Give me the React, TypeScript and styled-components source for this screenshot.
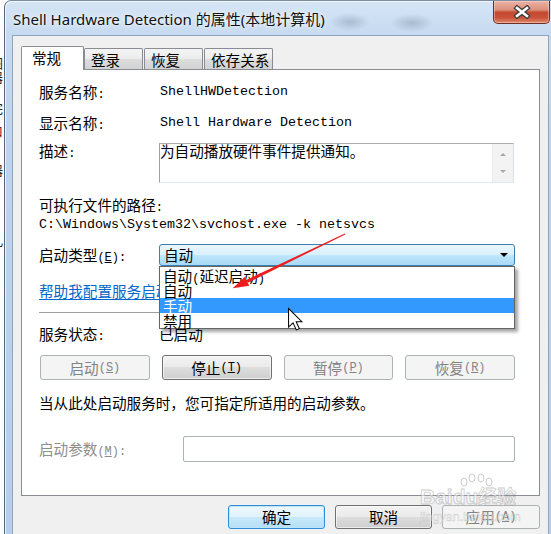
import React from "react";
import styled, { createGlobalStyle } from "styled-components";

const Global = createGlobalStyle`
  html, body { margin: 0; padding: 0; background: #ffffff; overflow: hidden; }
  #root { width: 551px; height: 534px; }
`;

const CJK = `"Noto Sans CJK SC", "Noto Sans", sans-serif`;

const Scene = styled.div`
  position: relative;
  width: 551px;
  height: 534px;
  overflow: hidden;
  display: flex;
  font-family: ${CJK};
  color: #000;
`;

const BackStrip = styled.div`
  width: 4px;
  flex: none;
  background: #fdfdfd;
  overflow: hidden;
  display: flex;
  flex-direction: column;
  font-size: 13px;
  line-height: 14px;
  color: #222;
`;

const Frag = styled.span<{ $top: number; $red?: boolean }>`
  margin-top: ${(p) => p.$top}px;
  margin-left: -10px;
  white-space: nowrap;
  color: ${(p) => (p.$red ? "#7a1020" : "#222")};
`;

const Window = styled.div`
  flex: 1;
  min-width: 0;
  display: flex;
  flex-direction: column;
  border-left: 1px solid #56677d;
  border-top: 1px solid #7b8ca2;
  border-top-left-radius: 7px;
  background:
    radial-gradient(ellipse 20px 9px at 345px 21px, rgba(70, 85, 110, 0.25), transparent),
    radial-gradient(ellipse 22px 9px at 407px 22px, rgba(70, 85, 110, 0.25), transparent),
    linear-gradient(180deg, #d5e5f6 0px, #c6daf0 34px, #bed4ec 140px, #b6cee9 100%);
  box-shadow: inset 1px 1px 0 rgba(255, 255, 255, 0.7);
`;

const TitleBar = styled.div`
  height: 34px;
  flex: none;
  display: flex;
  align-items: flex-start;
`;

const Title = styled.div`
  margin: 8px 0 0 8px;
  font-family: "Noto Sans", "Noto Sans CJK SC", sans-serif;
  font-size: 15px;
  line-height: 20px;
  color: #111;
  white-space: nowrap;
  text-shadow: 0 0 8px rgba(255, 255, 255, 0.95), 0 0 3px rgba(255, 255, 255, 0.9);
`;

const CloseButton = styled.div`
  margin-left: auto;
  margin-right: 1px;
  width: 57px;
  height: 23px;
  box-sizing: border-box;
  border: 1px solid #6e2e24;
  border-top: none;
  border-radius: 0 0 5px 5px;
  background: linear-gradient(
    180deg,
    #eab3a6 0%,
    #dc8f7e 40%,
    #c4492f 52%,
    #c9513a 75%,
    #de8a68 100%
  );
  box-shadow: inset 0 0 0 1px rgba(255, 220, 210, 0.45);
  display: flex;
  align-items: center;
  justify-content: center;
`;

const Body = styled.div`
  flex: 1;
  display: flex;
  padding: 0 2px 0 7px;
`;

const Client = styled.div`
  flex: 1;
  display: flex;
  flex-direction: column;
  background: #f0f0f0;
  border: 1px solid #8fa5bd;
  border-bottom: none;
`;

const TabRow = styled.div`
  height: 33px;
  flex: none;
  display: flex;
  align-items: flex-end;
  padding-left: 8px;
  position: relative;
  z-index: 1;
`;

const Tab = styled.div<{ $active?: boolean; $w: number; $gap: number }>`
  box-sizing: border-box;
  width: ${(p) => p.$w}px;
  margin-left: ${(p) => p.$gap}px;
  height: ${(p) => (p.$active ? 24 : 21)}px;
  margin-bottom: ${(p) => (p.$active ? -1 : 0)}px;
  border: 1px solid #898c95;
  border-bottom: none;
  border-radius: 2px 2px 0 0;
  background: ${(p) =>
    p.$active
      ? "#ffffff"
      : "linear-gradient(180deg, #f4f4f4 0%, #ececec 50%, #dedede 50%, #d2d2d2 100%)"};
  padding: ${(p) => (p.$active ? "1px 0 0 10px" : "1px 0 0 6px")};
  font-size: 14.6px;
  line-height: 20px;
  white-space: nowrap;
`;

const Panel = styled.div`
  position: relative;
  margin-left: 8px;
  width: 519px;
  height: 427px;
  box-sizing: border-box;
  border: 1px solid #898c95;
  background: #ffffff;
  padding: 12px 24px 0 17px;
  display: flex;
  flex-direction: column;
`;

const Row = styled.div<{ $mt: number; $cols?: string; $align?: string }>`
  margin-top: ${(p) => p.$mt}px;
  display: grid;
  grid-template-columns: ${(p) => p.$cols ?? "120px 1fr"};
  align-items: ${(p) => p.$align ?? "center"};
`;

const Label = styled.div<{ $muted?: boolean; $lh?: number }>`
  height: ${(p) => p.$lh ?? 20}px;
  font-size: 14.6px;
  line-height: ${(p) => p.$lh ?? 20}px;
  color: ${(p) => (p.$muted ? "#8d8d8d" : "#000")};
  white-space: nowrap;
`;

const Asc = styled.span`
  font-family: "Liberation Mono", monospace;
  font-size: 12px;
  line-height: 1;
`;

const Key = styled.span`
  text-decoration: underline;
  text-underline-offset: 1px;
`;

const Mono = styled.div<{ $pl?: number }>`
  height: 20px;
  font-family: "Liberation Mono", monospace;
  font-size: 13.33px;
  line-height: 20px;
  padding-left: ${(p) => p.$pl ?? 0}px;
  white-space: nowrap;
`;

const DescBox = styled.div`
  width: 355px;
  height: 40px;
  box-sizing: border-box;
  border: 1px solid;
  border-color: #abadb3 #dbdfe6 #e3e9ef #9ea1a8;
  display: flex;
`;

const DescText = styled.div`
  flex: 1;
  font-size: 14.6px;
  line-height: 14px;
  white-space: nowrap;
`;

const DescScroll = styled.div`
  width: 20px;
  background: #f3f3f3;
  border-left: 1px solid #ececec;
  display: flex;
  flex-direction: column;
  align-items: center;
  padding-top: 9px;
  gap: 14px;
`;

const ScrollArrow = styled.span<{ $down?: boolean }>`
  width: 0;
  height: 0;
  border-left: 3px solid transparent;
  border-right: 3px solid transparent;
  ${(p) => (p.$down ? "border-top: 3px solid #a8a8a8;" : "border-bottom: 3px solid #a8a8a8;")}
`;

const Block = styled.div<{ $mt: number }>`
  margin-top: ${(p) => p.$mt}px;
  display: flex;
  flex-direction: column;
`;

const ComboWrap = styled.div`
  position: relative;
`;

const ComboBox = styled.div`
  height: 22px;
  box-sizing: border-box;
  border: 1px solid #3c7fb1;
  border-radius: 3px;
  background: linear-gradient(180deg, #eaf6fd 0%, #d9f0fc 48%, #bee6fd 52%, #a7d9f5 100%);
  display: flex;
  align-items: center;
  justify-content: space-between;
  padding: 0 6px 0 4px;
  font-size: 14.6px;
  line-height: 20px;
`;

const ComboArrow = styled.span`
  width: 0;
  height: 0;
  border-left: 4px solid transparent;
  border-right: 4px solid transparent;
  border-top: 4px solid #000;
`;

const Dropdown = styled.div`
  position: absolute;
  top: 100%;
  left: 0;
  right: 0;
  z-index: 5;
  box-sizing: border-box;
  border: 1px solid #646464;
  background: #ffffff;
  padding-top: 1px;
  box-shadow: 3px 3px 3px rgba(0, 0, 0, 0.35);
`;

const Option = styled.div<{ $sel?: boolean }>`
  height: 15px;
  line-height: 15px;
  font-size: 14.6px;
  padding-left: 3px;
  white-space: nowrap;
  background: ${(p) => (p.$sel ? "#3399ff" : "transparent")};
  color: ${(p) => (p.$sel ? "#ffffff" : "#000")};
`;

const Link = styled.div<{ $mt: number }>`
  margin-top: ${(p) => p.$mt}px;
  height: 20px;
  font-size: 14.6px;
  line-height: 20px;
  color: #0066cc;
  text-decoration: underline;
  text-underline-offset: 2px;
  white-space: nowrap;
`;

const Separator = styled.div<{ $mt: number }>`
  margin-top: ${(p) => p.$mt}px;
  height: 1px;
  background: #a0a0a0;
`;

const ButtonGrid = styled.div<{ $mt: number }>`
  margin-top: ${(p) => p.$mt}px;
  margin-left: 1px;
  display: grid;
  grid-template-columns: repeat(4, 1fr);
  gap: 12px;
`;

type Variant = "normal" | "disabled" | "default";

const Btn = styled.div<{ $v: Variant; $h?: number; $w?: number }>`
  box-sizing: border-box;
  height: ${(p) => p.$h ?? 25}px;
  ${(p) => (p.$w ? `width: ${p.$w}px;` : "")}
  border-radius: 3px;
  display: flex;
  align-items: center;
  justify-content: center;
  font-size: 14.6px;
  line-height: 20px;
  white-space: nowrap;
  ${(p) =>
    p.$v === "disabled"
      ? `border: 1px solid #adb2b5; background: #f4f4f4; color: #838383;`
      : p.$v === "default"
      ? `border: 1px solid #2f8ed5; background: linear-gradient(180deg, #eef8fd 0%, #e0f2fc 50%, #c9e9fb 50%, #b4dff6 100%); box-shadow: inset 0 0 0 1px #bde6fb; color: #000;`
      : `border: 1px solid #707070; background: linear-gradient(180deg, #f2f2f2 0%, #ebebeb 50%, #dddddd 50%, #cfcfcf 100%); box-shadow: inset 0 0 0 1px rgba(255,255,255,0.6); color: #000;`}
`;

const Hint = styled.div<{ $mt: number }>`
  margin-top: ${(p) => p.$mt}px;
  height: 20px;
  font-size: 14.6px;
  line-height: 20px;
  white-space: nowrap;
`;

const ParamInput = styled.div`
  height: 26px;
  box-sizing: border-box;
  border: 1px solid #adb2b5;
  border-radius: 2px;
  background: #ffffff;
`;

const Footer = styled.div`
  margin-top: 9px;
  padding-right: 8px;
  display: flex;
  justify-content: flex-end;
  gap: 10px;
`;

const Overlay = styled.svg`
  position: absolute;
  left: 0;
  top: 0;
  pointer-events: none;
  z-index: 10;
`;

const Watermark = styled.div`
  position: absolute;
  left: 420px;
  top: 473px;
  z-index: 11;
  display: flex;
  flex-direction: column;
  align-items: flex-start;
  pointer-events: none;
  color: rgba(255, 255, 255, 0.55);
  -webkit-text-stroke: 0.8px rgba(150, 150, 150, 0.5);
`;

const WmTitle = styled.div`
  margin-top: -2px;
  font-family: "Liberation Sans", sans-serif;
  font-weight: bold;
  font-size: 21px;
  line-height: 18px;
  white-space: nowrap;
`;

const WmCjk = styled.span`
  font-family: ${CJK};
  font-size: 19px;
`;

const WmSub = styled.div`
  margin-top: 4px;
  font-family: "Liberation Sans", sans-serif;
  font-size: 12.5px;
  line-height: 14px;
  -webkit-text-stroke: 0.5px rgba(150, 150, 150, 0.45);
`;

const tabs = [
  { label: "常规", w: 63, gap: 0, active: true },
  { label: "登录", w: 59, gap: 0 },
  { label: "恢复", w: 59, gap: 1 },
  { label: "依存关系", w: 69, gap: 1 },
];

const frags = [
  { t: 11, c: ")" },
  { t: 31, c: "图" },
  { t: 0, c: "器" },
  { t: 17, c: "完" },
  { t: 9, c: "口", red: true },
  { t: 25, c: "器" },
  { t: 56, c: "几" },
];

export default function App() {
  return (
    <>
      <Global />
      <Scene>
        <BackStrip>
          {frags.map((f, i) => (
            <Frag key={i} $top={f.t} $red={f.red}>
              {f.c}
            </Frag>
          ))}
        </BackStrip>
        <Window>
          <TitleBar>
            <Title>Shell Hardware Detection 的属性(本地计算机)</Title>
            <CloseButton>
              <svg width="20" height="14" viewBox="0 0 20 14">
                <path d="M5 3 L15 11 M15 3 L5 11" stroke="#3a3a3a" strokeWidth="5" strokeLinecap="square" />
                <path d="M5 3 L15 11 M15 3 L5 11" stroke="#ffffff" strokeWidth="2.6" strokeLinecap="square" />
              </svg>
            </CloseButton>
          </TitleBar>
          <Body>
            <Client>
              <TabRow>
                {tabs.map((t) => (
                  <Tab key={t.label} $active={t.active} $w={t.w} $gap={t.gap}>
                    {t.label}
                  </Tab>
                ))}
              </TabRow>
              <Panel>
                <Row $mt={0}>
                  <Label>
                    服务名称<Asc>:</Asc>
                  </Label>
                  <Mono $pl={1}>ShellHWDetection</Mono>
                </Row>
                <Row $mt={11}>
                  <Label>
                    显示名称<Asc>:</Asc>
                  </Label>
                  <Mono $pl={1}>Shell Hardware Detection</Mono>
                </Row>
                <Row $mt={10} $align="start">
                  <Label $lh={16}>
                    描述<Asc>:</Asc>
                  </Label>
                  <DescBox>
                    <DescText>为自动播放硬件事件提供通知。</DescText>
                    <DescScroll>
                      <ScrollArrow />
                      <ScrollArrow $down />
                    </DescScroll>
                  </DescBox>
                </Row>
                <Block $mt={12}>
                  <Label>
                    可执行文件的路径<Asc>:</Asc>
                  </Label>
                  <Mono>C:\Windows\System32\svchost.exe -k netsvcs</Mono>
                </Block>
                <Row $mt={9}>
                  <Label>
                    启动类型<Asc>
                      (<Key>E</Key>):
                    </Asc>
                  </Label>
                  <ComboWrap>
                    <ComboBox>
                      <span>自动</span>
                      <ComboArrow />
                    </ComboBox>
                    <Dropdown>
                      <Option>
                        自动<Asc>(</Asc>延迟启动<Asc>)</Asc>
                      </Option>
                      <Option>自动</Option>
                      <Option $sel>手动</Option>
                      <Option>禁用</Option>
                    </Dropdown>
                  </ComboWrap>
                </Row>
                <Link $mt={15}>帮助我配置服务启动选项。</Link>
                <Separator $mt={11} />
                <Row $mt={11}>
                  <Label>
                    服务状态<Asc>:</Asc>
                  </Label>
                  <Label>已启动</Label>
                </Row>
                <ButtonGrid $mt={11}>
                  <Btn $v="disabled">
                    启动<Asc>
                      (<Key>S</Key>)
                    </Asc>
                  </Btn>
                  <Btn $v="normal">
                    停止<Asc>
                      (<Key>T</Key>)
                    </Asc>
                  </Btn>
                  <Btn $v="disabled">
                    暂停<Asc>
                      (<Key>P</Key>)
                    </Asc>
                  </Btn>
                  <Btn $v="disabled">
                    恢复<Asc>
                      (<Key>R</Key>)
                    </Asc>
                  </Btn>
                </ButtonGrid>
                <Hint $mt={13}>当从此处启动服务时，您可指定所适用的启动参数。</Hint>
                <Row $mt={23} $cols="144px 1fr">
                  <Label $muted>
                    启动参数<Asc>
                      (<Key>M</Key>):
                    </Asc>
                  </Label>
                  <ParamInput />
                </Row>
              </Panel>
              <Footer>
                <Btn $v="default" $h={24} $w={97}>
                  确定
                </Btn>
                <Btn $v="normal" $h={24} $w={97}>
                  取消
                </Btn>
                <Btn $v="disabled" $h={24} $w={98}>
                  应用<Asc>
                    (<Key>A</Key>)
                  </Asc>
                </Btn>
              </Footer>
            </Client>
          </Body>
        </Window>

        <Overlay width="551" height="534" viewBox="0 0 551 534">
          <polygon
            points="247.8,282.7 246.4,279.9 344.8,233.6 345.2,234.4"
            fill="#ee1c1c"
          />
          <polygon points="232.7,288.3 249.3,285.8 244.9,276.8" fill="#ee1c1c" />
          <g transform="translate(288 308) scale(1.12)">
            <path
              d="M0.5 0.5 L0.5 17 L4.5 13.2 L7.4 19.6 L10.1 18.4 L7.3 12.2 L12.4 12.2 Z"
              fill="#ffffff"
              stroke="#000000"
              strokeWidth="0.9"
              strokeLinejoin="miter"
            />
          </g>
        </Overlay>

        <Watermark>
          <svg width="70" height="16" viewBox="0 0 70 16" style={{ marginLeft: 36 }}>
            <g fill="rgba(255,255,255,0.5)" stroke="rgba(150,150,150,0.5)" strokeWidth="1">
              <ellipse cx="8" cy="9" rx="3" ry="4" />
              <ellipse cx="16" cy="5" rx="3" ry="4" />
              <ellipse cx="25" cy="5" rx="3" ry="4" />
              <ellipse cx="33" cy="9" rx="3" ry="4" />
            </g>
          </svg>
          <WmTitle>
            Baidu<WmCjk>经验</WmCjk>
          </WmTitle>
          <WmSub>jingyan.baidu.com</WmSub>
        </Watermark>
      </Scene>
    </>
  );
}
